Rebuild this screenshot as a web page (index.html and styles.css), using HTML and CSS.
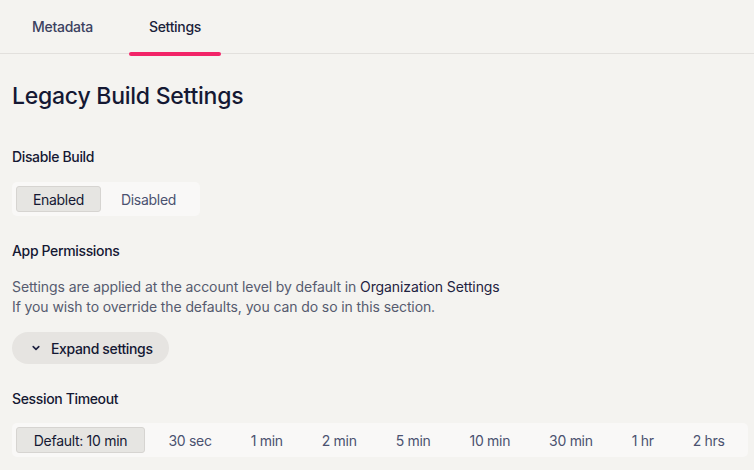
FILE: index.html
```
<!DOCTYPE html>
<html>
<head>
<meta charset="utf-8">
<link rel="stylesheet" href="styles.css">
</head>
<body>
<div class="tabs">
  <div class="tab">Metadata</div>
  <div class="tab active">Settings</div>
</div>
<main class="content">
  <h1 class="title">Legacy Build Settings</h1>
  <section class="group g-build">
    <h2 class="label">Disable Build</h2>
    <div class="seg">
      <div class="opt sel">Enabled</div>
      <div class="opt">Disabled</div>
    </div>
  </section>
  <section class="group g-perm">
    <h2 class="label">App Permissions</h2>
    <p class="desc">Settings are applied at the account level by default in <span class="dark">Organization Settings</span><br>If you wish to override the defaults, you can do so in this section.</p>
    <button class="expand">
      <svg width="10" height="10" viewBox="0 0 10 10"><path d="M2.2 3.6 L5 6.4 L7.8 3.6" fill="none" stroke="#1d2140" stroke-width="1.6" stroke-linecap="round" stroke-linejoin="round"/></svg>
      <span>Expand settings</span>
    </button>
  </section>
  <section class="group g-session">
    <h2 class="label">Session Timeout</h2>
    <div class="seg wide">
      <div class="opt sel">Default: 10 min</div>
      <div class="opt">30 sec</div>
      <div class="opt">1 min</div>
      <div class="opt">2 min</div>
      <div class="opt">5 min</div>
      <div class="opt">10 min</div>
      <div class="opt">30 min</div>
      <div class="opt">1 hr</div>
      <div class="opt">2 hrs</div>
    </div>
  </section>
</main>
</body>
</html>
```
FILE: styles.css
```
* { box-sizing: border-box; }
html, body { margin: 0; padding: 0; }
body {
  background: #f4f3f0;
  font-family: "Inter", "Noto Sans", sans-serif;
  color: #1b1f3b;
  width: 754px;
  height: 470px;
  overflow: hidden;
}
.tabs {
  display: flex;
  height: 54px;
  border-bottom: 1px solid #e2e0dd;
  padding-left: 12px;
}
.tab {
  width: 101px;
  text-align: center;
  font-size: 14px;
  font-weight: 500;
  letter-spacing: -0.3px;
  color: #3b4160;
  padding-top: 18px;
  position: relative;
}
.tab.active { width: 92px; margin-left: 16px; color: #1b1f3b; }
.tab.active::after {
  content: "";
  position: absolute;
  left: 0; right: 0;
  bottom: -3px;
  height: 4px;
  border-radius: 2px;
  background: #f22468;
}
.content { padding: 0 12px; }
.title {
  margin: 27px 0 0;
  font-size: 23px;
  font-weight: 500;
  letter-spacing: -0.25px;
  line-height: 30px;
  color: #141833;
}
.label {
  margin: 0;
  font-size: 14px;
  font-weight: 500;
  letter-spacing: -0.35px;
  line-height: 18px;
  color: #141833;
}
.g-build { margin-top: 37px; }
.g-perm { margin-top: 26px; }
.g-session { margin-top: 26px; }
.seg {
  display: inline-flex;
  margin-top: 16px;
  padding: 4px;
  background: #f9f8f7;
  border-radius: 5px;
  height: 34px;
}
.opt {
  font-size: 14px;
  letter-spacing: -0.3px;
  color: #4b5270;
  display: flex;
  align-items: center;
  justify-content: center;
  height: 26px;
  border: 1px solid transparent;
  border-radius: 3px;
}
.g-build .opt { width: 85px; }
.g-build .opt + .opt { width: 95px; }
.opt.sel {
  background: #e6e5e2;
  border-color: #d6d4d1;
  color: #141833;
}
.wide { display: flex; width: 736px; margin-top: 15px; }
.wide .opt { flex: 1 1 auto; padding: 0; }
.wide .opt.sel { flex: none; padding: 0 16px; width: 129px; margin-right: 4px; }
.desc {
  margin: 17px 0 0;
  font-size: 14px;
  letter-spacing: -0.1px;
  line-height: 20px;
  color: #565b6f;
}
.dark { color: #1f2340; }
.expand {
  margin-top: 15px;
  display: flex;
  align-items: center;
  gap: 10px;
  height: 32px;
  padding: 0 16px 0 19px;
  border: none;
  border-radius: 16px;
  background: #e6e4e1;
  font-family: inherit;
  font-size: 14px;
  font-weight: 500;
  letter-spacing: -0.35px;
  color: #141833;
}
```
